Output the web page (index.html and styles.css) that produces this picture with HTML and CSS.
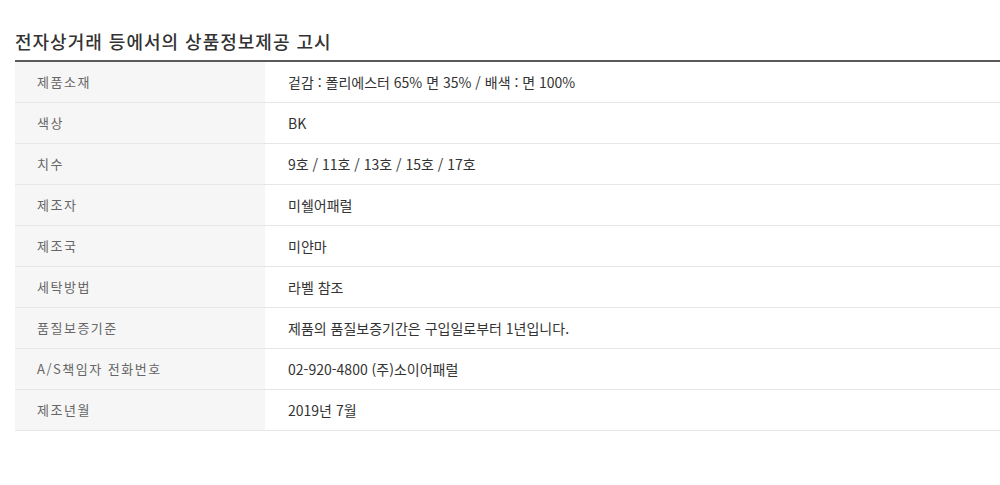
FILE: index.html
```html
<!DOCTYPE html>
<html lang="ko">
<head>
<meta charset="utf-8">
<link rel="stylesheet" href="styles.css">
</head>
<body>
<section class="notice">
  <h2 class="notice-title">전자상거래 등에서의 상품정보제공 고시</h2>
  <table class="info">
    <tbody>
      <tr><th>제품소재</th><td>겉감 : 폴리에스터 65% 면 35% / 배색 : 면 100%</td></tr>
      <tr><th>색상</th><td>BK</td></tr>
      <tr><th>치수</th><td>9호 / 11호 / 13호 / 15호 / 17호</td></tr>
      <tr><th>제조자</th><td>미쉘어패럴</td></tr>
      <tr><th>제조국</th><td>미얀마</td></tr>
      <tr><th>세탁방법</th><td>라벨 참조</td></tr>
      <tr><th>품질보증기준</th><td>제품의 품질보증기간은 구입일로부터 1년입니다.</td></tr>
      <tr><th>A/S책임자 전화번호</th><td>02-920-4800 (주)소이어패럴</td></tr>
      <tr><th>제조년월</th><td>2019년 7월</td></tr>
    </tbody>
  </table>
</section>
</body>
</html>
```

FILE: styles.css
```css
html, body {
  margin: 0;
  padding: 0;
  background: #fff;
}
body {
  font-family: "Noto Sans CJK KR", "Noto Sans", sans-serif;
  color: #333;
}
.notice {
  padding: 29px 0 0 15px;
}
.notice-title {
  margin: 0;
  height: 31px;
  font-size: 18px;
  font-weight: 500;
  line-height: 24px;
  color: #333;
  letter-spacing: 1px;
}
.info {
  width: 100%;
  border-collapse: collapse;
  border-top: 2px solid #5a5a5a;
}
.info th,
.info td {
  height: 40px;
  padding: 0;
  border-bottom: 1px solid #e6e6e6;
  text-align: left;
  vertical-align: middle;
  line-height: 20px;
}
.info th {
  width: 250px;
  padding-left: 22px;
  box-sizing: border-box;
  background: #f6f6f6;
  color: #666;
  font-size: 13px;
  font-weight: 400;
  letter-spacing: 1.5px;
}
.info td {
  padding-left: 23px;
  color: #333;
  font-size: 14px;
}
```
